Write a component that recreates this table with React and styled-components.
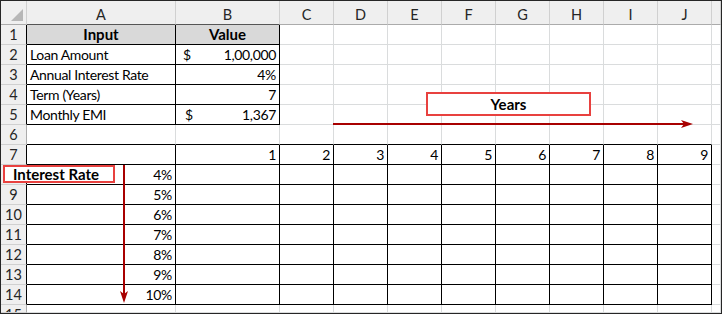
import React from "react";
import styled, { createGlobalStyle, css } from "styled-components";

const GlobalStyle = createGlobalStyle`
  html, body { margin: 0; padding: 0; background: #ffffff; }
  body { font-family: Lato, "Liberation Sans", Arial, sans-serif; }
`;

const GRID = "#dadcdd";
const HEAD_BG = "#efefef";
const HEAD_LINE = "#ababab";
const HEAD_SEP = "#d0d0d0";
const INK = "#000000";
const ARROW = "#a80000";
const MARK = "#e8413f";

const Frame = styled.div`
  width: 720px;
  height: 312px;
  border: 1px solid #262626;
  position: relative;
  overflow: hidden;
`;

const Sheet = styled.div`
  display: grid;
  grid-template-columns: 26px 149px 104px repeat(8, 54px) 9px;
  grid-template-rows: 24px repeat(14, 20px) 8px;
  font-size: 14px;
  letter-spacing: -0.35px;
  color: #000;
`;

const Corner = styled.div`
  position: relative;
  background: ${HEAD_BG};
  border-right: 1px solid ${HEAD_SEP};
  border-bottom: 1px solid ${HEAD_LINE};
  &::after {
    content: "";
    position: absolute;
    right: 3px;
    bottom: 3px;
    width: 12px;
    height: 12px;
    background: #b7b7b7;
    clip-path: polygon(100% 0, 100% 100%, 0 100%);
  }
`;

const ColHead = styled.div`
  background: ${HEAD_BG};
  border-right: 1px solid ${HEAD_SEP};
  border-bottom: 1px solid ${(p) => (p.$dark ? "#555" : HEAD_LINE)};
  display: flex;
  align-items: center;
  justify-content: center;
  padding-top: 4px;
  box-sizing: border-box;
  font-size: 14.5px;
  letter-spacing: 0;
  color: #262626;
`;

const RowHead = styled.div`
  background: ${HEAD_BG};
  border-bottom: 1px solid ${HEAD_SEP};
  border-right: 1px solid ${(p) => (p.$dark ? INK : HEAD_LINE)};
  display: flex;
  align-items: flex-start;
  justify-content: center;
  line-height: 20px;
  font-size: 14.5px;
  letter-spacing: 0;
  color: #262626;
  overflow: hidden;
`;

const Cell = styled.div`
  border-right: 1px solid ${(p) => (p.$r ? INK : GRID)};
  border-bottom: 1px solid ${(p) => (p.$b ? INK : GRID)};
  background: ${(p) => (p.$fill ? "#d9d9d9" : "#ffffff")};
  display: flex;
  align-items: flex-start;
  justify-content: ${(p) =>
    p.$align === "right" ? "flex-end" : p.$align === "center" ? "center" : "flex-start"};
  padding: 0 3px;
  line-height: 19px;
  white-space: nowrap;
  overflow: hidden;
  ${(p) =>
    p.$bold &&
    css`
      font-weight: 700;
      font-size: 15px;
      letter-spacing: 0;
    `}
`;

const Accounting = styled(Cell)`
  justify-content: space-between;
  padding-left: ${(p) => p.$lead}px;
`;

const Label = styled.div`
  position: absolute;
  box-sizing: border-box;
  border: 2px solid ${MARK};
  background: #ffffff;
  display: flex;
  align-items: center;
  font-weight: 700;
  font-size: 15px;
  color: #000;
`;

const YearsLabel = styled(Label)`
  left: 425px;
  top: 91px;
  width: 165px;
  height: 24px;
  justify-content: center;
`;

const RateLabel = styled(Label)`
  left: 2px;
  top: 164px;
  width: 112px;
  height: 18px;
  padding-left: 8px;
`;

const Arrows = styled.svg`
  position: absolute;
  left: 0;
  top: 0;
  pointer-events: none;
`;

const COLS = ["A", "B", "C", "D", "E", "F", "G", "H", "I", "J", ""];

// cell contents keyed "row:colIndex"
const DATA = {
  "1:0": { text: "Input", align: "center", bold: true, fill: true },
  "1:1": { text: "Value", align: "center", bold: true, fill: true },
  "2:0": { text: "Loan Amount" },
  "2:1": { cur: "1,00,000", lead: 7 },
  "3:0": { text: "Annual Interest Rate" },
  "3:1": { text: "4%", align: "right" },
  "4:0": { text: "Term (Years)" },
  "4:1": { text: "7", align: "right" },
  "5:0": { text: "Monthly EMI" },
  "5:1": { cur: "1,367", lead: 9 },
};
for (let y = 1; y <= 9; y++) DATA[`7:${y}`] = { text: String(y), align: "right" };
for (let r = 8; r <= 14; r++) DATA[`${r}:0`] = { text: `${r - 4}%`, align: "right" };

const inTable = (r, c) => r >= 1 && r <= 5 && c <= 1;
const inGrid = (r, c) => r >= 7 && r <= 14 && c <= 9;

function cellBorders(r, c) {
  return {
    b: inTable(r, c) || (r >= 6 && r <= 14 && c <= 9),
    r: inTable(r, c) || inGrid(r, c),
  };
}

export default function App() {
  const rows = [];
  for (let r = 1; r <= 15; r++) {
    const dark = (r >= 1 && r <= 5) || (r >= 7 && r <= 14);
    rows.push(
      <RowHead key={`h${r}`} $dark={dark}>
        {r}
      </RowHead>
    );
    COLS.forEach((_, c) => {
      const d = DATA[`${r}:${c}`] || {};
      const { b, r: right } = cellBorders(r, c);
      if (d.cur) {
        rows.push(
          <Accounting key={`${r}-${c}`} $b={b} $r={right} $lead={d.lead}>
            <span>$</span>
            <span>{d.cur}</span>
          </Accounting>
        );
      } else {
        rows.push(
          <Cell
            key={`${r}-${c}`}
            $b={b}
            $r={right}
            $align={d.align}
            $bold={d.bold}
            $fill={d.fill}
          >
            {d.text}
          </Cell>
        );
      }
    });
  }

  return (
    <>
      <GlobalStyle />
      <Frame>
        <Sheet>
          <Corner />
          {COLS.map((l, i) => (
            <ColHead key={`c${i}`} $dark={i <= 1}>
              {l}
            </ColHead>
          ))}
          {rows}
        </Sheet>
        <YearsLabel>Years</YearsLabel>
        <RateLabel>Interest Rate</RateLabel>
        <Arrows width="720" height="312" viewBox="0 0 720 312">
          <line x1="332" y1="123" x2="684" y2="123" stroke={ARROW} strokeWidth="2" />
          <path d="M692 123 L680 119 L683 123 L680 127 Z" fill={ARROW} />
          <line x1="123" y1="164" x2="123" y2="294" stroke={ARROW} strokeWidth="2" />
          <path d="M123 302 L119 290 L123 293 L127 290 Z" fill={ARROW} />
        </Arrows>
      </Frame>
    </>
  );
}
